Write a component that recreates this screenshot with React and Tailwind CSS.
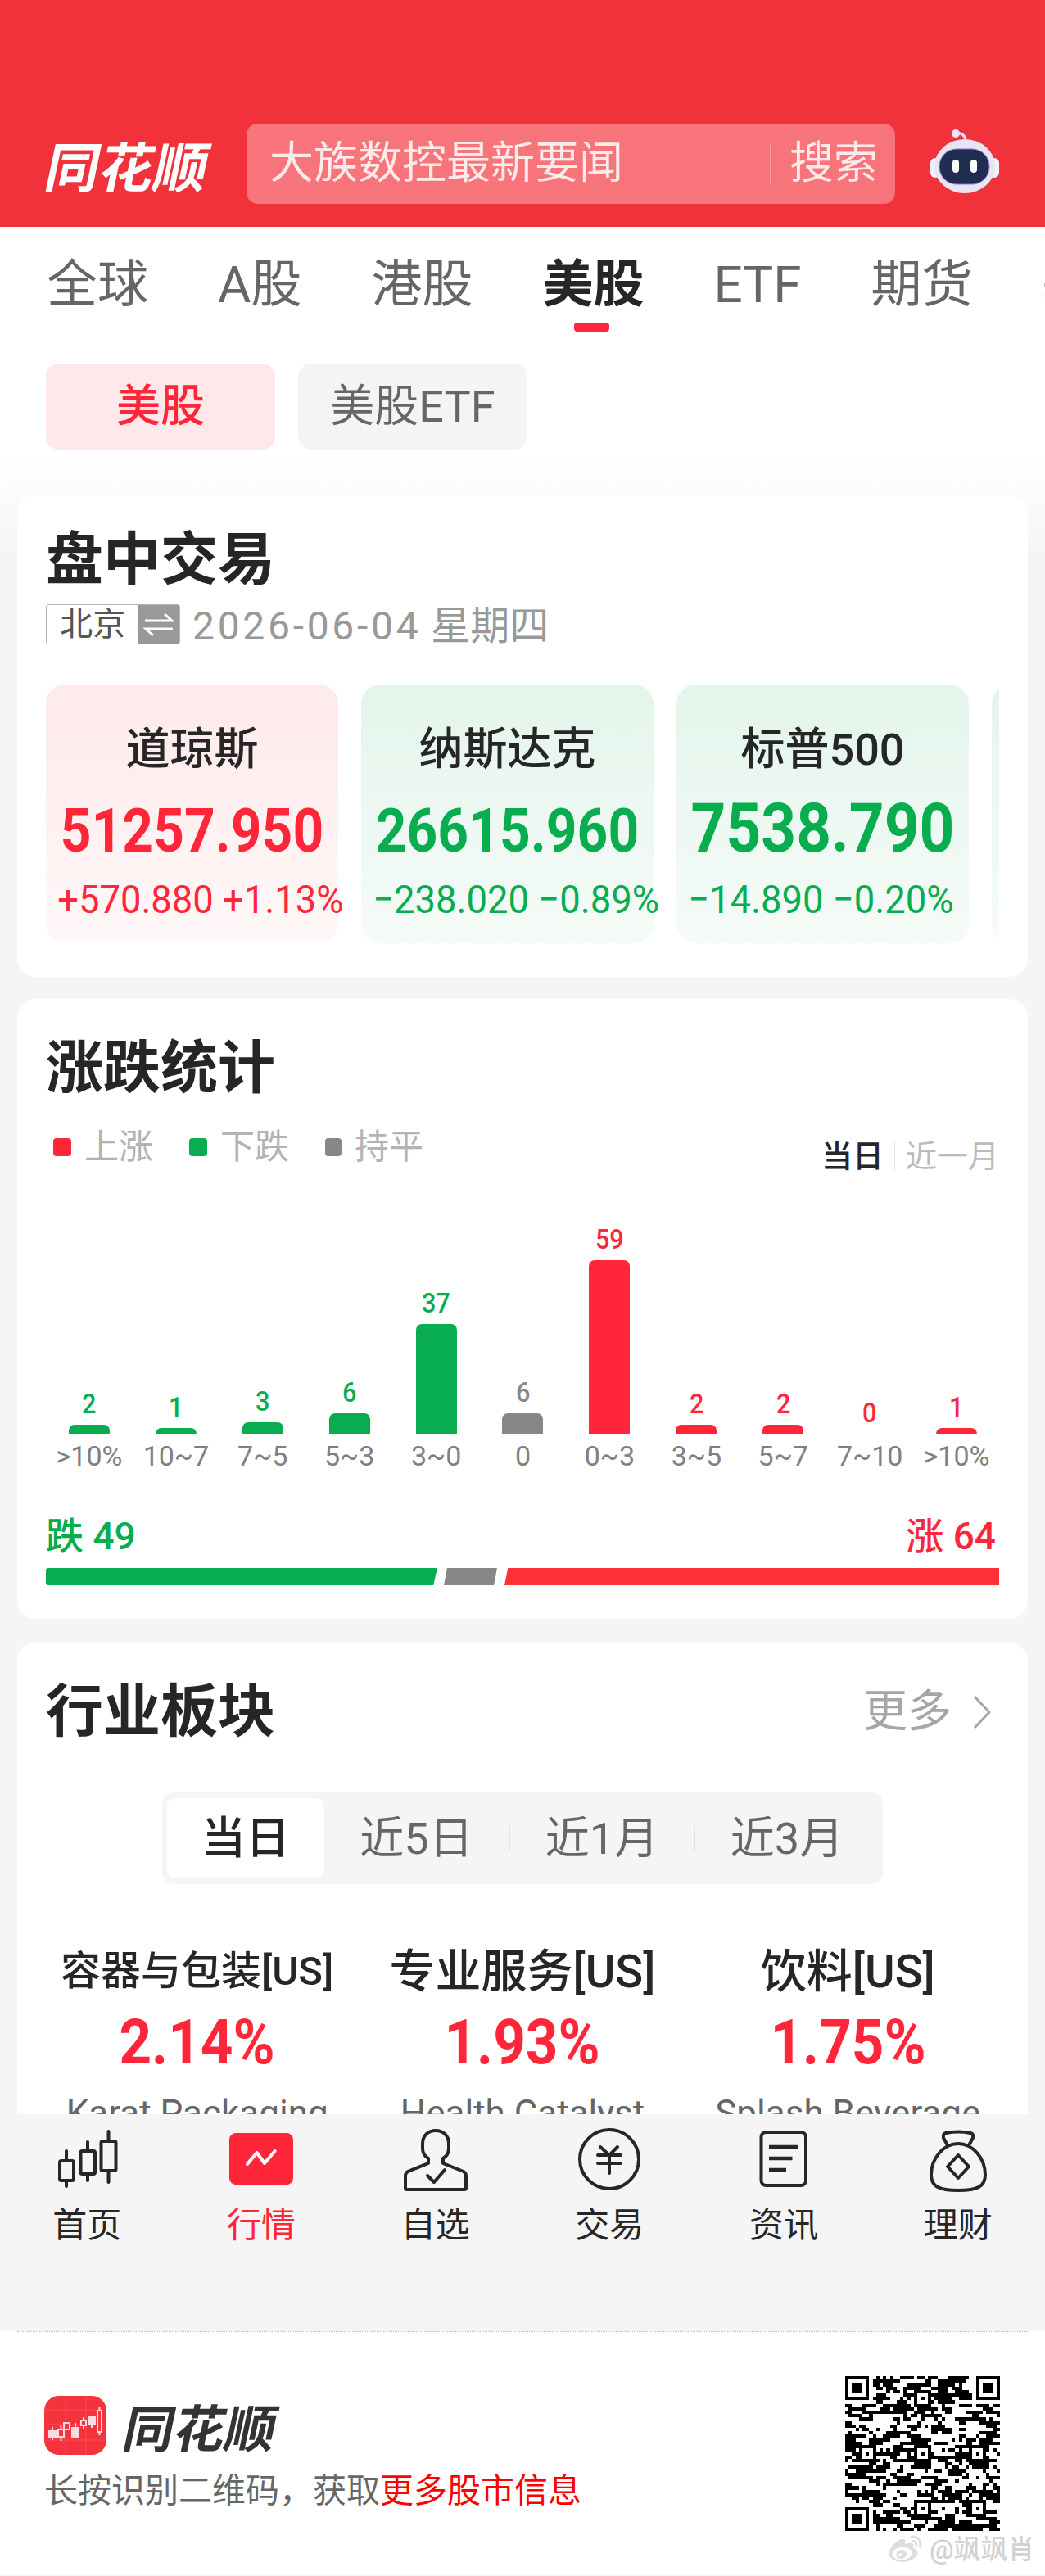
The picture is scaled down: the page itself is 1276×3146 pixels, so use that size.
import React from "react";
import { FaWeibo } from "react-icons/fa";

const RED = "text-[#ff2639]";
const GREEN = "text-[#07ad4f]";

const tabs = ["全球", "A股", "港股", "美股", "ETF", "期货", "基金"];

const indices = [
  { name: "道琼斯", value: "51257.950", change: "+570.880 +1.13%", up: true, large: false },
  { name: "纳斯达克", value: "26615.960", change: "−238.020 −0.89%", up: false, large: false },
  { name: "标普500", value: "7538.790", change: "−14.890 −0.20%", up: false, large: true },
];

const bars = [
  { n: 2, h: 11, l: ">10%", c: "g" },
  { n: 1, h: 7, l: "10~7", c: "g" },
  { n: 3, h: 14, l: "7~5", c: "g" },
  { n: 6, h: 25, l: "5~3", c: "g" },
  { n: 37, h: 134, l: "3~0", c: "g" },
  { n: 6, h: 25, l: "0", c: "n" },
  { n: 59, h: 212, l: "0~3", c: "r" },
  { n: 2, h: 11, l: "3~5", c: "r" },
  { n: 2, h: 11, l: "5~7", c: "r" },
  { n: 0, h: 0, l: "7~10", c: "r" },
  { n: 1, h: 7, l: ">10%", c: "r" },
];

const barBg = { g: "bg-[#07ad4f]", n: "bg-[#878787]", r: "bg-[#ff2639]" };
const barText = { g: "text-[#07ad4f]", n: "text-[#878787]", r: "text-[#ff2639]" };

const sectors = [
  { t: "容器与包装[US]", p: "2.14%", s: "Karat Packaging", small: true },
  { t: "专业服务[US]", p: "1.93%", s: "Health Catalyst", small: false },
  { t: "饮料[US]", p: "1.75%", s: "Splash Beverage", small: false },
];

const IconCandles = () => (
  <svg width="80" height="80" viewBox="0 0 80 80" fill="none" stroke="#262626" strokeWidth="4" strokeLinejoin="round">
    <path d="M15 29V41M15 65V72M41 18V29M41 57V65M66.5 5V17M66.5 53V67" strokeLinecap="round" />
    <rect x="7" y="41" width="17" height="24" rx="2" />
    <rect x="32.5" y="29" width="17.5" height="28" rx="2" />
    <rect x="57.5" y="17" width="18" height="36" rx="2" />
  </svg>
);
const IconMarket = () => (
  <svg width="80" height="80" viewBox="0 0 80 80" fill="none">
    <rect x="1" y="7" width="78" height="63" rx="8" fill="#ff2639" />
    <path d="M23 45L34.6 31L44 44L56.7 29" stroke="#fff" strokeWidth="4" strokeLinecap="round" strokeLinejoin="round" />
  </svg>
);
const IconPerson = () => (
  <svg width="80" height="80" viewBox="0 0 80 80" fill="none" stroke="#262626" strokeWidth="4" strokeLinejoin="round" strokeLinecap="round">
    <path d="M31 44V38C26 35 24 31 24 26V20C24 10 31 4 40 4C49 4 56 10 56 20V26C56 31 54 35 49 38V44L74 54Q77 56 77 59V74Q77 76 75 76H5Q3 76 3 74V59Q3 56 6 54Z" />
    <path d="M30 59L38 67L51 52" />
  </svg>
);
const IconYen = () => (
  <svg width="80" height="80" viewBox="0 0 80 80" fill="none" stroke="#262626" strokeWidth="4" strokeLinecap="round" strokeLinejoin="round">
    <circle cx="40" cy="39" r="36" />
    <path d="M29 24L40 34L50 24M26 34H54M26 44H54M40 34V56" />
  </svg>
);
const IconNews = () => (
  <svg width="80" height="80" viewBox="0 0 80 80" fill="none" stroke="#262626" strokeWidth="4">
    <rect x="12.5" y="6" width="54.5" height="65" rx="6" />
    <path d="M22 24H57M22 38H50.5M22 52H43" strokeWidth="4.5" />
  </svg>
);
const IconBag = () => (
  <svg width="80" height="80" viewBox="0 0 80 80" fill="none" stroke="#262626" strokeWidth="4" strokeLinejoin="round">
    <path d="M40 20C22 20 7 38 7 58C7 72 16 77 40 77C64 77 73 72 73 58C73 38 58 20 40 20Z" />
    <path d="M27 22L22 13Q21 8 25 7Q40 4 55 7Q59 8 58 13L53 22" />
    <path d="M40 34L53 48L40 62L27 48Z" />
  </svg>
);

const nav = [
  { l: "首页", I: IconCandles },
  { l: "行情", I: IconMarket, active: true },
  { l: "自选", I: IconPerson },
  { l: "交易", I: IconYen },
  { l: "资讯", I: IconNews },
  { l: "理财", I: IconBag },
];

const Robot = () => (
  <svg width="84" height="78" viewBox="0 0 84 78" fill="none">
    <path d="M31 5C38 3 43 8 43 14" stroke="#e8e8f4" strokeWidth="3" />
    <circle cx="31" cy="5" r="5" fill="#e8e8f4" />
    <rect x="0" y="35" width="12" height="24" rx="6" fill="#f1f1f8" />
    <rect x="72" y="35" width="12" height="24" rx="6" fill="#f1f1f8" />
    <ellipse cx="42" cy="45" rx="37" ry="33" fill="#e6e6f3" />
    <rect x="11" y="24" width="61" height="43" rx="21" fill="#1f2d50" stroke="#9a6fe0" strokeWidth="1" />
    <rect x="27" y="37" width="8" height="16" rx="4" fill="#fff" />
    <rect x="49" y="37" width="8" height="16" rx="4" fill="#fff" />
  </svg>
);

const AppIcon = () => (
  <svg width="76" height="72" viewBox="0 0 76 72" fill="none">
    <rect width="76" height="72" rx="18" fill="#f5333d" />
    <path d="M0 17H76M0 35H76M0 54H76M26 0V72M51 0V72" stroke="#fff" strokeOpacity="0.13" strokeWidth="1" />
    <g fill="#fbdde0">
      <rect x="5" y="42" width="10" height="9" />
      <rect x="9" y="38" width="2" height="16" />
      <rect x="33" y="38" width="10" height="13" />
      <rect x="37" y="33" width="2" height="5" />
      <rect x="53" y="24" width="10" height="11" />
      <rect x="57" y="35" width="2" height="4" />
    </g>
    <g stroke="#fbdde0" strokeWidth="2">
      <rect x="17" y="41" width="7" height="9" />
      <path d="M20.5 36V41M20.5 50V55" />
      <rect x="24" y="33" width="7" height="8" />
      <rect x="45" y="30" width="6" height="6" />
      <path d="M48 26V30M48 36V40" />
      <rect x="65" y="18" width="5" height="26" />
      <path d="M67.5 14V18M67.5 44V48" />
    </g>
  </svg>
);

function buildQr() {
  const N = 45;
  const g = Array.from({ length: N }, () => Array(N).fill(0));
  let seed = 20260604;
  const rnd = () => {
    seed = (seed * 1664525 + 1013904223) >>> 0;
    return (seed >>> 16) / 65536;
  };
  for (let y = 0; y < N; y++) for (let x = 0; x < N; x++) g[y][x] = rnd() > 0.5 ? 1 : 0;
  for (let y = 1; y < N - 1; y++)
    for (let x = 1; x < N - 1; x++) if (rnd() > 0.55) g[y][x] = g[y][x - 1];
  const finder = (ox, oy) => {
    for (let y = -1; y <= 7; y++)
      for (let x = -1; x <= 7; x++) {
        const X = ox + x, Y = oy + y;
        if (X < 0 || Y < 0 || X >= N || Y >= N) continue;
        const inRing = x >= 0 && x <= 6 && y >= 0 && y <= 6 && (x === 0 || x === 6 || y === 0 || y === 6);
        const inCore = x >= 2 && x <= 4 && y >= 2 && y <= 4;
        g[Y][X] = inRing || inCore ? 1 : 0;
      }
  };
  finder(0, 0);
  finder(N - 7, 0);
  finder(0, N - 7);
  const pos = [6, 22, 38];
  pos.forEach((cy) =>
    pos.forEach((cx) => {
      if ((cx === 6 && cy === 6) || (cx === 38 && cy === 6) || (cx === 6 && cy === 38)) return;
      for (let y = -2; y <= 2; y++)
        for (let x = -2; x <= 2; x++)
          g[cy + y][cx + x] = Math.max(Math.abs(x), Math.abs(y)) === 1 ? 0 : 1;
    })
  );
  let d = "";
  g.forEach((row, y) => row.forEach((v, x) => { if (v) d += `M${x} ${y}h1v1h-1z`; }));
  return d;
}
const qrPath = buildQr();

const Title = ({ children }) => (
  <div className="h-[80px] text-[70px] leading-[80px] font-bold text-[#262626]">{children}</div>
);

export default function App() {
  return (
    <div className="w-[1276px] h-[3146px] overflow-hidden bg-[#f5f5f5] [font-family:Roboto,'Noto_Sans_CJK_SC',sans-serif]">
      {/* header */}
      <header className="h-[277px] bg-[#f1323a] pt-[151px] pl-[56px] flex items-start">
        <div className="w-[202px] h-[56px] mt-[21px] flex items-center justify-center">
          <span className="inline-block -skew-x-12 text-[66px] leading-[56px] font-bold text-white whitespace-nowrap [font-family:'Noto_Sans_CJK_SC',sans-serif]">同花顺</span>
        </div>
        <div className="ml-[43px] w-[792px] h-[98px] rounded-[14px] bg-[#f6747a] pl-[28px] pr-[21px] flex items-center justify-between text-[#fdeaea]">
          <span className="text-[54px] leading-[98px]">大族数控最新要闻</span>
          <div className="flex items-center gap-[22px]">
            <span className="w-[2px] h-[50px] bg-[#fa9ea2]" />
            <span className="text-[54px] leading-[98px]">搜索</span>
          </div>
        </div>
        <div className="ml-[43px] mt-[7px]">
          <Robot />
        </div>
      </header>

      <div className="bg-[linear-gradient(to_bottom,#fff_283px,#f5f5f5_400px)]">
        {/* tabs */}
        <nav className="h-[167px] pl-[57px] pt-[36px] flex gap-[85px] overflow-hidden whitespace-nowrap">
          {tabs.map((t) =>
            t === "美股" ? (
              <div key={t} className="relative h-[70px] text-[62px] leading-[70px] font-bold text-[#262626]">
                {t}
                <span className="absolute left-[39px] top-[81px] w-[43px] h-[11px] rounded-[4px] bg-[#ff2639]" />
              </div>
            ) : (
              <div key={t} className="h-[70px] text-[62px] leading-[70px] text-[#666666]">{t}</div>
            )
          )}
        </nav>

        {/* sub tabs */}
        <div className="pl-[56px] flex gap-[28px]">
          <div className={`w-[280px] h-[105px] rounded-[16px] bg-[#fee8ea] flex items-center justify-center text-[54px] font-medium ${RED}`}>美股</div>
          <div className="w-[280px] h-[105px] rounded-[16px] bg-[#f4f4f4] flex items-center justify-center text-[54px] text-[#666666]">美股ETF</div>
        </div>

        {/* card 1 */}
        <section className="mt-[56px] mx-[21px] h-[588px] rounded-[22px] bg-white pt-[39px] px-[35px]">
          <Title>盘中交易</Title>
          <div className="mt-[14px] h-[49px] flex items-center">
            <div className="h-[49px] w-[164px] flex border border-[#b5b5b5] rounded-[3px] overflow-hidden">
              <div className="w-[113px] flex items-center justify-center text-[40px] leading-[47px] text-[#555555] bg-white">北京</div>
              <div className="w-[50px] bg-[#999999] flex items-center justify-center">
                <svg width="38" height="34" viewBox="0 0 38 34" fill="none" stroke="#fff" strokeWidth="3">
                  <path d="M2 12H35L26 4" />
                  <path d="M36 22H3L12 30" />
                </svg>
              </div>
            </div>
            <span className="ml-[15px] mt-[3px] text-[48px] leading-[49px] text-[#999999] whitespace-nowrap">
              <span className="tracking-[3.7px]">2026-06-04</span>
              <span className="ml-[12px]">星期四</span>
            </span>
          </div>

          <div className="mt-[49px] w-[1164px] overflow-hidden flex gap-[28px]">
            {indices.map((c) => (
              <div
                key={c.name}
                className={`w-[357px] h-[316px] shrink-0 rounded-[24px] pt-[56px] ${c.up ? "bg-[linear-gradient(to_bottom,#ffe9eb,#fff8f8)]" : "bg-[linear-gradient(to_bottom,#e3f5eb,#f6fbf8)]"}`}
              >
                <div className="h-[48px] flex justify-center text-[54px] leading-[48px] font-medium text-[#262626] whitespace-nowrap">{c.name}</div>
                <div className={`mt-[37px] h-[76px] flex justify-center whitespace-nowrap font-bold scale-x-[0.89] ${c.up ? RED : GREEN} ${c.large ? "text-[84px] leading-[70px]" : "text-[74px] leading-[76px]"}`}>{c.value}</div>
                <div className={`mt-[24px] h-[44px] pl-[15px] whitespace-nowrap origin-left scale-x-[0.945] text-[48px] leading-[44px] ${c.up ? RED : GREEN}`}>{c.change}</div>
              </div>
            ))}
            <div className="w-[357px] h-[316px] shrink-0 rounded-[24px] bg-[linear-gradient(to_bottom,#e3f5eb,#f6fbf8)]" />
          </div>
        </section>

        {/* card 2 */}
        <section className="mt-[27px] mx-[21px] h-[757px] rounded-[22px] bg-white pt-[45px] px-[35px]">
          <Title>涨跌统计</Title>
          <div className="mt-[34px] h-[50px] flex justify-between items-start">
            <div className="h-[44px] pl-[9px] flex items-center gap-[44px] text-[42px] leading-[44px] text-[#b3b3b3]">
              <div className="flex items-center gap-[16px]"><span className="w-[22px] h-[22px] rounded-[4px] bg-[#ff2639]" />上涨</div>
              <div className="flex items-center gap-[16px]"><span className="w-[22px] h-[22px] rounded-[4px] bg-[#07ad4f]" />下跌</div>
              <div className="flex items-center gap-[16px]"><span className="w-[20px] h-[22px] rounded-[4px] bg-[#878787]" />持平</div>
            </div>
            <div className="mt-[11px] h-[44px] flex items-center text-[38px] leading-[44px]">
              <span className="font-medium text-[#262626]">当日</span>
              <span className="mx-[13px] w-px h-[36px] bg-[#e5e5e5]" />
              <span className="text-[#bbbbbb]">近一月</span>
            </div>
          </div>

          <div className="h-[322px] w-[1165px] grid grid-cols-11 items-end">
            {bars.map((b, i) => (
              <div key={i} className="flex flex-col items-center">
                <span className={`h-[36px] mb-[8px] text-[34px] leading-[36px] font-medium scale-x-[0.9] ${barText[b.c]}`}>{b.n}</span>
                <div className={`w-[50px] rounded-t-[7px] ${barBg[b.c]}`} style={{ height: b.h }} />
              </div>
            ))}
          </div>
          <div className="mt-[5px] w-[1165px] grid grid-cols-11">
            {bars.map((b, i) => (
              <div key={i} className="h-[44px] text-center text-[34px] leading-[44px] text-[#808080] whitespace-nowrap">{b.l}</div>
            ))}
          </div>

          <div className="mt-[51px] h-[50px] pr-[4px] flex justify-between items-center text-[46px] leading-[50px] font-medium">
            <span className={GREEN}>跌 49</span>
            <span className={RED}>涨 64</span>
          </div>
          <div className="mt-[14px] h-[21px] flex">
            <div className="w-[478px] h-[21px] rounded-l-[3px] bg-[#07ad4f] [clip-path:polygon(0_0,100%_0,99%_100%,0_100%)]" />
            <div className="ml-[8px] w-[65px] h-[21px] bg-[#878787] [clip-path:polygon(6%_0,100%_0,94%_100%,0_100%)]" />
            <div className="ml-[9px] w-[604px] h-[21px] bg-[#ff3038] [clip-path:polygon(0.7%_0,100%_0,100%_100%,0_100%)]" />
          </div>
        </section>

        {/* card 3 */}
        <section className="mt-[29px] mx-[21px] h-[576px] rounded-t-[22px] bg-white pt-[45px] overflow-hidden">
          <div className="px-[35px] flex justify-between items-center">
            <Title>行业板块</Title>
            <div className="flex items-center gap-[26px] pr-[10px] text-[54px] leading-[80px] text-[#a6a6a6]">
              更多
              <svg width="22" height="42" viewBox="0 0 22 42" fill="none" stroke="#a6a6a6" strokeWidth="3">
                <path d="M2 2L20 21L2 40" />
              </svg>
            </div>
          </div>

          <div className="mt-[58px] mx-auto w-[880px] h-[112px] rounded-[14px] bg-[#f5f5f5] flex items-center pl-[6px]">
            <div className="w-[192px] h-[98px] rounded-[10px] bg-white flex items-center justify-center text-[54px] font-medium text-[#262626]">当日</div>
            <div className="w-[225px] flex items-center justify-center text-[54px] text-[#666666]">近5日</div>
            <span className="w-[2px] h-[32px] bg-[#e3e3e3]" />
            <div className="w-[224px] flex items-center justify-center text-[54px] text-[#666666]">近1月</div>
            <span className="w-[2px] h-[32px] bg-[#e3e3e3]" />
            <div className="w-[224px] flex items-center justify-center text-[54px] text-[#666666]">近3月</div>
          </div>

          <div className="mt-[77px] px-[21px] grid grid-cols-3">
            {sectors.map((s) => (
              <div key={s.t} className="flex flex-col items-center whitespace-nowrap">
                <div className={`h-[60px] font-medium text-[#262626] ${s.small ? "text-[49px] leading-[60px]" : "text-[56px] leading-[60px]"}`}>{s.t}</div>
                <div className={`mt-[16px] h-[80px] text-[76px] leading-[80px] font-bold scale-x-[0.91] ${RED}`}>{s.p}</div>
                <div className="mt-[17px] h-[60px] text-[44px] leading-[60px] text-[#666666]">{s.s}</div>
              </div>
            ))}
          </div>
        </section>
      </div>

      {/* bottom nav */}
      <nav className="h-[265px] bg-[#f5f5f5] pt-[16px] grid grid-cols-6 w-[1276px]">
        {nav.map(({ l, I, active }) => (
          <div key={l} className="flex flex-col items-center">
            <I />
            <div className={`mt-[15px] h-[50px] text-[42px] leading-[50px] ${active ? RED : "text-[#262626]"}`}>{l}</div>
          </div>
        ))}
      </nav>

      {/* footer */}
      <footer className="relative h-[298px] bg-white">
        <div className="mx-[21px] border-t border-dotted border-[#bdbdbd]" />
        <div className="flex justify-between pl-[54px] pr-[55px]">
          <div className="pt-[78px]">
            <div className="flex items-center gap-[23px]">
              <AppIcon />
              <span className="inline-block -skew-x-12 text-[62px] leading-[72px] font-bold text-[#333333] whitespace-nowrap [font-family:'Noto_Sans_CJK_SC',sans-serif]">同花顺</span>
            </div>
            <div className="mt-[19px] h-[50px] text-[41px] leading-[50px] text-[#666666] whitespace-nowrap">
              长按识别二维码，获取<span className="text-[#ff0000]">更多股市信息</span>
            </div>
          </div>
          <div className="pt-[54px]">
            <svg width="189" height="189" viewBox="0 0 45 45" shapeRendering="crispEdges">
              <path d={qrPath} fill="#000" />
            </svg>
          </div>
        </div>
        <div className="absolute left-[1083px] top-[245px] flex items-center gap-[7px] text-[#d2d2d2]">
          <FaWeibo className="w-[45px] h-[40px] text-[#dddddd]" />
          <span className="text-[33px] leading-[44px] font-medium whitespace-nowrap">@飒飒肖</span>
        </div>
      </footer>
    </div>
  );
}
